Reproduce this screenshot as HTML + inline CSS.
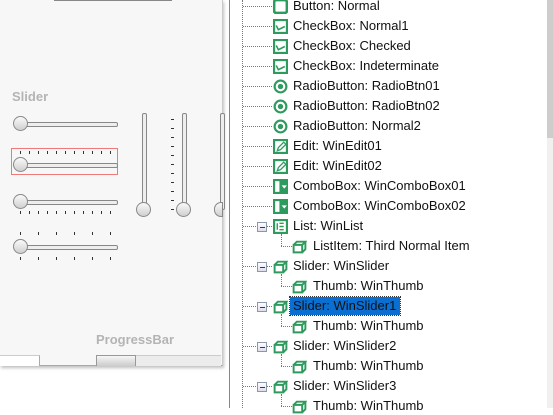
<!DOCTYPE html><html><head><style>
body{margin:0;width:553px;height:408px;overflow:hidden;background:#fff;position:relative;font-family:"Liberation Sans","Noto Sans CJK SC",sans-serif}
.a{position:absolute}
.panel{left:0;top:0;width:222px;height:365px;background:#f7f7f7;border-right:1px solid #c9c9c9;border-bottom:1px solid #aaa;box-shadow:1px 2px 3px rgba(0,0,0,.25)}
.lbl{color:#b4b4b4;font-weight:bold;font-size:13px}
.ht{height:3px;background:#eee;border:1px solid #888;border-radius:2px}
.vt{width:3px;background:#eee;border:1px solid #888;border-radius:2px}
.th{width:13px;height:13px;border-radius:50%;background:linear-gradient(#fafafa,#cfcfcf);border:1px solid #888}
.tk{width:1px;height:3px;background:#333}
.hk{width:3px;height:1px;background:#333}
.row{position:absolute;font-size:13px;color:#111;white-space:nowrap;line-height:18px}
.dh{position:absolute;height:0;border-top:1px dotted #777}
.dv{position:absolute;width:0;border-left:1px dotted #777}
.ic{position:absolute;width:15px;height:15px}
.pm{position:absolute;width:8px;height:8px;border:1px solid #8a98aa;background:linear-gradient(#fff,#dde);}
.pm:after{content:"";position:absolute;left:2px;top:4px;width:5px;height:1px;background:#245}
</style></head><body>
<div class="a panel"></div>
<div class="a" style="left:54px;top:0;width:118px;height:1px;background:#888"></div>
<div class="a lbl" style="left:12px;top:89px">Slider</div>
<div class="a ht" style="left:20px;top:122px;width:96px"></div><div class="a th" style="left:13px;top:116px"></div>
<div class="a" style="left:11px;top:148px;width:105px;height:25px;border:1.5px solid #f07a7a"></div>
<div id="t1"></div>
<div class="a ht" style="left:20px;top:163px;width:96px"></div><div class="a th" style="left:13px;top:157px"></div>
<div class="a ht" style="left:20px;top:200px;width:96px"></div><div class="a th" style="left:13px;top:194px"></div>
<div class="a ht" style="left:20px;top:245px;width:96px"></div><div class="a th" style="left:13px;top:239px"></div>
<div class="a vt" style="left:142px;top:113px;height:95px"></div><div class="a th" style="left:136px;top:202px"></div>
<div class="a vt" style="left:182px;top:113px;height:95px"></div><div class="a th" style="left:176px;top:202px"></div>
<div class="a vt" style="left:220px;top:113px;height:95px"></div><div class="a th" style="left:214px;top:202px;width:7px;border-radius:7px 0 0 7px"></div>
<div class="a lbl" style="left:96px;top:332px">ProgressBar</div>
<div class="a" style="left:0;top:355px;width:39px;height:10px;background:#fff;border-top:1px solid #ccc;border-right:1px solid #aaa"></div>
<div class="a" style="left:96px;top:355px;width:125px;height:10px;background:#ececec;border-top:1px solid #ccc"></div>
<div class="a" style="left:96px;top:355px;width:38px;height:10px;background:linear-gradient(#f6f6f6,#ccc);border:1px solid #999;border-bottom:0"></div>
<div class="a" style="left:229px;top:0;width:1px;height:408px;background:#888"></div>
<div class="a" style="left:547px;top:0;width:6px;height:408px;background:#f0f0f0"></div>
<div class="a" style="left:547px;top:0;width:6px;height:138px;background:#cdcdcd"></div>
<div class="dv" style="left:242px;top:0;height:408px"></div>
<div id="tree"></div>
<script>
var h='';
for(var i=0;i<11;i++){var x=20+i*9;h+='<div class="a tk" style="left:'+x+'px;top:151px"></div><div class="a tk" style="left:'+x+'px;top:211px"></div>';}
for(var i=0;i<6;i++){var x=20+i*18;h+='<div class="a tk" style="left:'+x+'px;top:232px"></div><div class="a tk" style="left:'+x+'px;top:257px"></div>';}
for(var i=0;i<11;i++){h+='<div class="a hk" style="left:171px;top:'+(119+i*9)+'px"></div>';}
document.getElementById('t1').outerHTML=h;
var G='#2e9a5e';
var icons={
btn:'<svg class="ic" viewBox="0 0 14 14"><rect x="1" y="1" width="12" height="12" rx="2" fill="none" stroke="'+G+'" stroke-width="2.5"/></svg>',
chk:'<svg class="ic" viewBox="0 0 14 14"><rect x="1" y="1" width="12" height="12" fill="none" stroke="'+G+'" stroke-width="2"/><path d="M3 6l2 4 6-3" fill="none" stroke="'+G+'" stroke-width="1.5"/></svg>',
rad:'<svg class="ic" viewBox="0 0 14 14"><circle cx="7" cy="7" r="5.5" fill="none" stroke="'+G+'" stroke-width="2"/><circle cx="7" cy="7" r="2.5" fill="'+G+'"/></svg>',
edt:'<svg class="ic" viewBox="0 0 14 14"><rect x="0" y="0" width="14" height="14" fill="'+G+'"/><rect x="2" y="2" width="10" height="10" fill="#fff"/><path d="M4 11l1-3 5-5 2 2-5 5z" fill="none" stroke="'+G+'" stroke-width="1.2"/></svg>',
cmb:'<svg class="ic" viewBox="0 0 14 14"><rect x="0" y="0" width="14" height="14" fill="'+G+'"/><rect x="2" y="2" width="4" height="10" fill="#fff"/><path d="M8 6h5l-2.5 3z" fill="#fff"/></svg>',
lst:'<svg class="ic" viewBox="0 0 14 14"><rect x="1" y="1" width="12" height="12" fill="none" stroke="'+G+'" stroke-width="2"/><path d="M4 4v6M6 4h4M6 7h4M6 10h4" stroke="'+G+'" stroke-width="1.3"/></svg>',
cub:'<svg class="ic" viewBox="0 0 14 14"><path d="M1.5 5.5h8v7h-8zM1.5 5.5l3-3h8l-3 3M9.5 12.5l3-3v-7" fill="none" stroke="'+G+'" stroke-width="1.8"/></svg>'
};
var rows=[
[0,'btn','Button: Normal'],[0,'chk','CheckBox: Normal1'],[0,'chk','CheckBox: Checked'],[0,'chk','CheckBox: Indeterminate'],
[0,'rad','RadioButton: RadioBtn01'],[0,'rad','RadioButton: RadioBtn02'],[0,'rad','RadioButton: Normal2'],
[0,'edt','Edit: WinEdit01'],[0,'edt','Edit: WinEdit02'],[0,'cmb','ComboBox: WinComboBox01'],[0,'cmb','ComboBox: WinComboBox02'],
[2,'lst','List: WinList'],[1,'cub','ListItem: Third Normal Item'],
[2,'cub','Slider: WinSlider'],[1,'cub','Thumb: WinThumb'],
[3,'cub','Slider: WinSlider1'],[1,'cub','Thumb: WinThumb'],
[2,'cub','Slider: WinSlider2'],[1,'cub','Thumb: WinThumb'],
[2,'cub','Slider: WinSlider3'],[1,'cub','Thumb: WinThumb']];
var t='';
for(var i=0;i<rows.length;i++){var r=rows[i],cy=6+i*20;
 if(r[0]==1){t+='<div class="dv" style="left:281px;top:'+(cy-12)+'px;height:12px"></div><div class="dh" style="left:281px;top:'+cy+'px;width:11px"></div>';
  t+=icons[r[1]].replace('class="ic"','class="ic" style="left:292px;top:'+(cy-7)+'px"');
  t+='<div class="row" style="left:313px;top:'+(cy-9)+'px">'+r[2]+'</div>';}
 else{t+='<div class="dh" style="left:243px;top:'+cy+'px;width:29px"></div>';
  if(r[0]>=2)t+='<div class="pm" style="left:257px;top:'+(cy-4)+'px"></div>';
  t+=icons[r[1]].replace('class="ic"','class="ic" style="left:273px;top:'+(cy-7)+'px"');
  var st=r[0]==3?'background:#0a6fd1;outline:1px dotted #333;padding:0 3px 0 3px;left:290px;width:104px;':'left:293px;';
  t+='<div class="row" style="'+st+'top:'+(cy-9)+'px">'+r[2]+'</div>';}
}
document.getElementById('tree').outerHTML=t;
</script>
</body></html>
